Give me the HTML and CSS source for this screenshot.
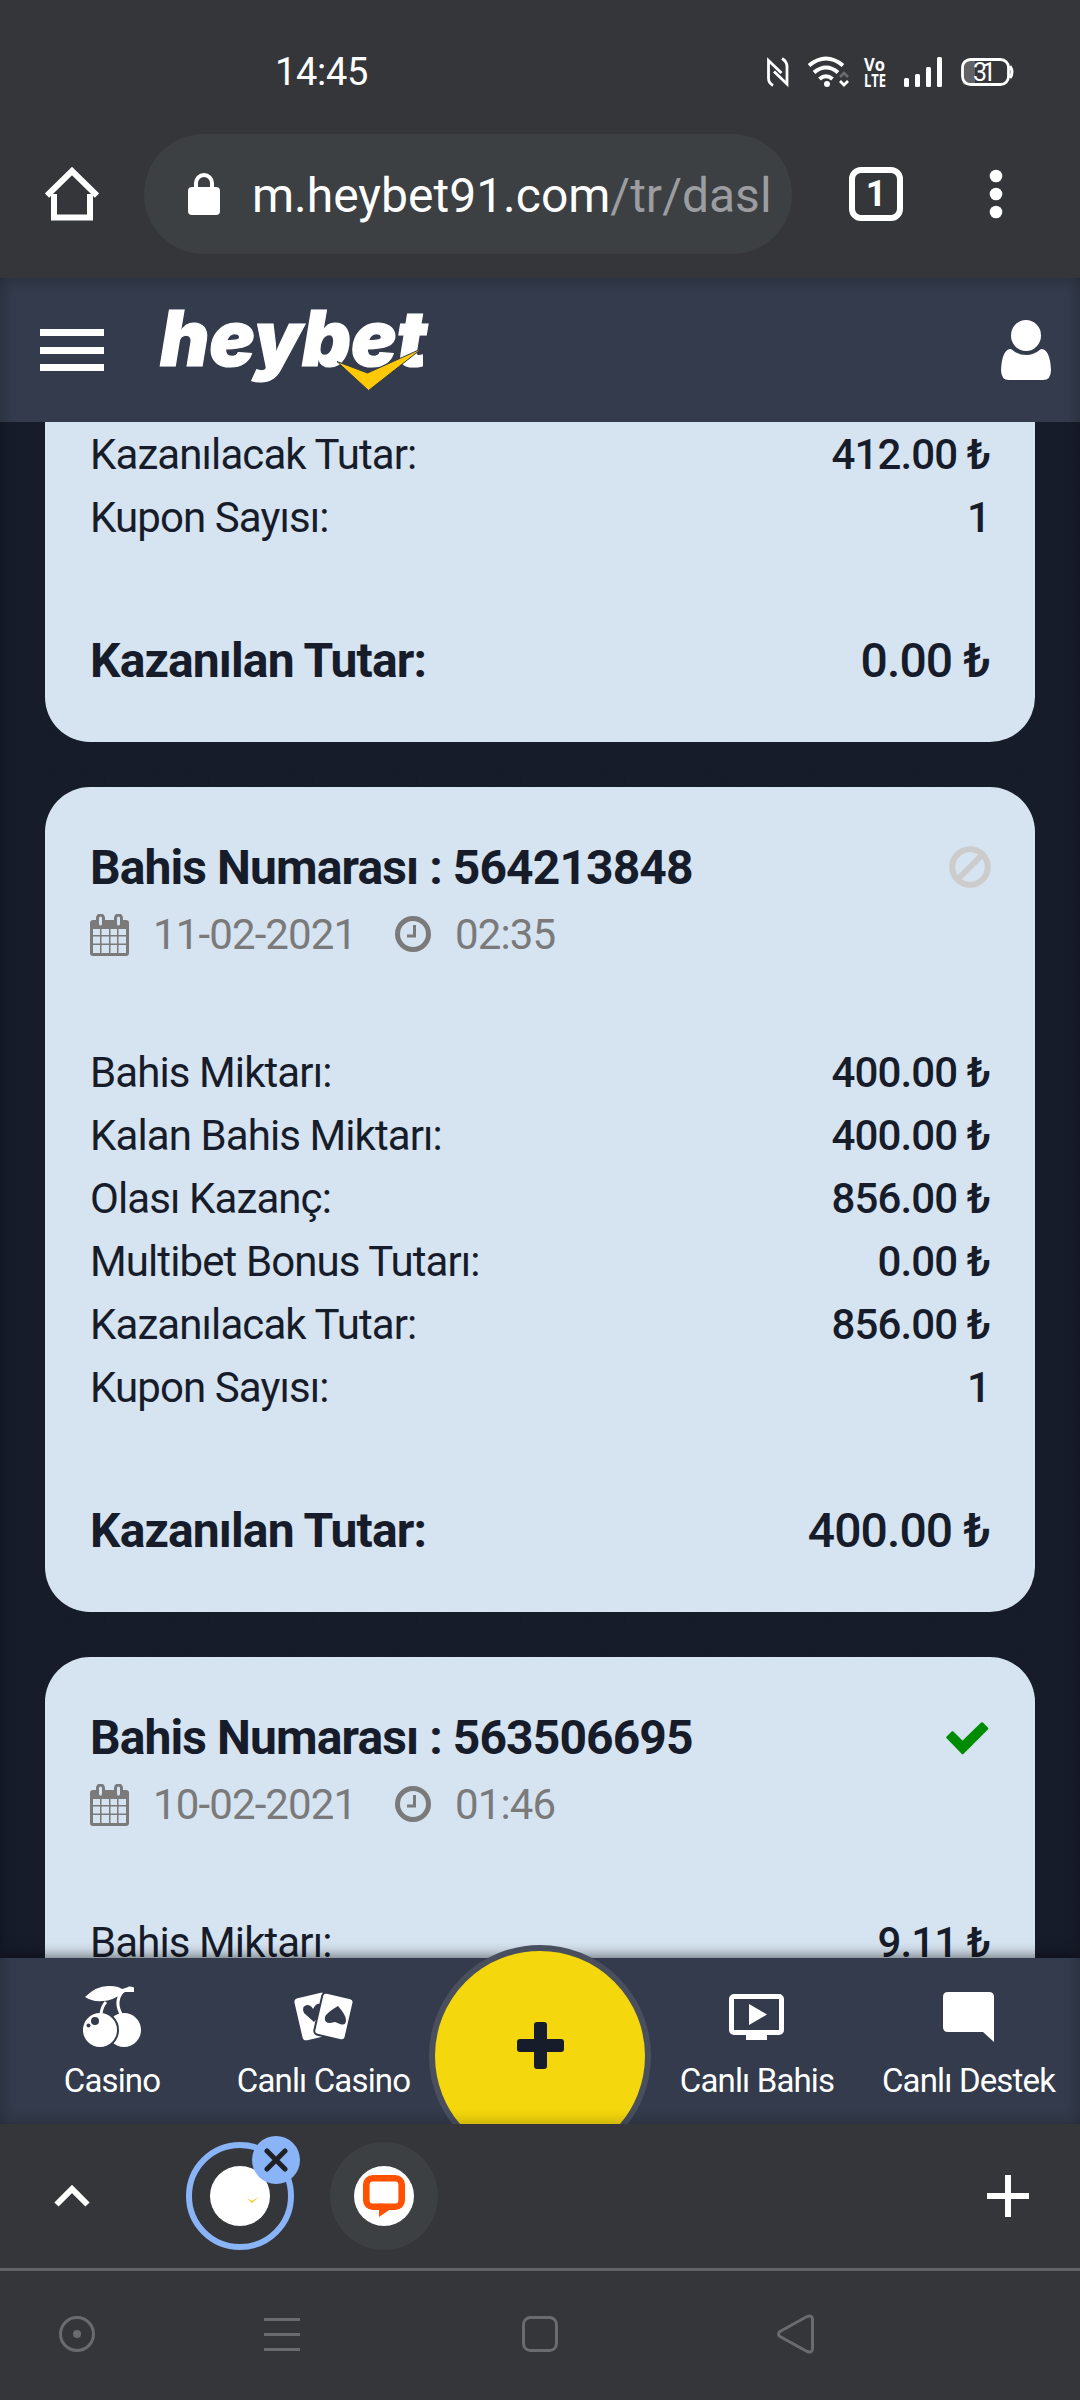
FILE: index.html
```html
<!DOCTYPE html>
<html lang="tr">
<head>
<meta charset="utf-8">
<title>heybet</title>
<link rel="stylesheet" href="styles.css">
</head>
<body>
<svg class="defs" width="0" height="0">
  <symbol id="cal" viewBox="0 0 39 42">
    <path fill="#7a7a7a" fill-rule="evenodd" d="M3 6h3V4a4 4 0 0 1 9 0v2h9V4a4 4 0 0 1 9 0v2h3a3 3 0 0 1 3 3v30a3 3 0 0 1-3 3H3a3 3 0 0 1-3-3V9a3 3 0 0 1 3-3zM9 4v6a1.500 1.500 0 0 0 3 0V4a1.500 1.500 0 0 0-3 0zm18 0v6a1.500 1.500 0 0 0 3 0V4a1.500 1.500 0 0 0-3 0zM3 15v6h7v-6zm8.500 0v6H19v-6zm9 0v6H27v-6zm8 0v6H36v-6zM3 22.500v7h7v-7zm8.500 0v7H19v-7zm9 0v7H27v-7zm8 0v7H36v-7zM3 31v8h7v-8zm8.500 0v8H19v-8zm9 0v8H27v-8zm8 0v8H36v-8z"/>
  </symbol>
  <symbol id="clk" viewBox="0 0 36 36">
    <circle cx="18" cy="18" r="15.500" fill="none" stroke="#7a7a7a" stroke-width="5"/>
    <path d="M19.500 9v11H12" fill="none" stroke="#7a7a7a" stroke-width="3"/>
  </symbol>
</svg>

<div class="status">
  <span class="time">14:45</span>
  <svg class="sysicons" width="260" height="40" viewBox="0 0 260 40">
    <path d="M9 33.500Q4.500 31 4.500 26V8.500L17.500 21M18 6.500Q23 9.500 23 14.500V32L10 19.500" fill="none" stroke="#fff" stroke-width="2.800"/>
    <g fill="none" stroke="#fff" stroke-width="4">
      <path d="M45 13.500q17-14 34 0M50 20.500q12-10 24 0M55.500 27q6.500-5.500 13 0"/>
    </g>
    <circle cx="63" cy="32" r="3" fill="#fff"/>
    <path d="M76 25l4-4 4 4" fill="none" stroke="#6b6c6e" stroke-width="2.500"/>
    <path d="M76 29l4 4 4-4" fill="none" stroke="#fff" stroke-width="2.800"/>
    <text class="volte" x="100" y="19" textLength="21" lengthAdjust="spacingAndGlyphs">Vo</text>
    <text class="volte" x="100" y="35" textLength="22" lengthAdjust="spacingAndGlyphs">LTE</text>
    <g fill="#fff"><rect x="140" y="26" width="5" height="9" rx="1.500"/><rect x="151" y="22" width="5" height="13" rx="1.500"/><rect x="162" y="15" width="5" height="20" rx="1.500"/><rect x="173" y="5" width="5" height="30" rx="1.500"/></g>
    <path d="M200 8h11v25h-11q-2-2-2-5V13q0-3 2-5z" fill="#616265"/>
    <rect x="198.500" y="7.500" width="46" height="25" rx="8" fill="none" stroke="#fff" stroke-width="2.800"/>
    <path d="M246 14q4 6 0 12" fill="none" stroke="#fff" stroke-width="3"/>
    <text class="batt" x="220.500" y="28.500" text-anchor="middle" textLength="23">31</text>
  </svg>
</div>

<div class="browser">
  <svg class="home" width="54" height="54" viewBox="0 0 54 54"><path d="M9 27v23.500h36V27M2 28.500L27 4l25 24.500" fill="none" stroke="#fff" stroke-width="6"/></svg>
  <div class="pill">
    <svg width="32" height="42" viewBox="0 0 32 42"><rect y="14" width="32" height="28" rx="4" fill="#fff"/><path d="M8 15v-5a8 8 0 0 1 16 0v5" fill="none" stroke="#fff" stroke-width="4"/></svg>
    <span class="url">m.heybet91.com<span class="path">/tr/dasl</span></span>
  </div>
  <span class="tabs">1</span>
  <svg class="dots" width="14" height="50" viewBox="0 0 14 50"><g fill="#fff"><circle cx="7" cy="7" r="6.300"/><circle cx="7" cy="25" r="6.300"/><circle cx="7" cy="43" r="6.300"/></g></svg>
</div>

<div class="page">
  <header class="top">
    <div class="burger"><i></i><i></i><i></i></div>
    <svg class="logo" width="280" height="90" viewBox="0 0 280 90">
      <text class="word" x="2" y="60.500" textLength="267" lengthAdjust="spacingAndGlyphs">heybet</text>
      <path d="M179 56.500l30.500 11.500L264 43.500 210.500 85.500z" fill="#ffca05" stroke="#333b4c" stroke-width="1"/>
    </svg>
    <svg class="user" width="50" height="60" viewBox="0 0 50 60"><path fill="#fff" d="M10 29Q1 29 0 50q0 10 8 10h34q8 0 8-10-1-21-10-21-7 6-15 6t-15-6z"/><ellipse cx="25" cy="15.500" rx="16" ry="16.500" fill="#fff" stroke="#333b4c" stroke-width="2"/></svg>
  </header>

  <main class="feed">
    <section class="card first">
      <div class="row"><span>Kazanılacak Tutar:</span><b>412.00 ₺</b></div>
      <div class="row"><span>Kupon Sayısı:</span><b>1</b></div>
      <div class="total"><span>Kazanılan Tutar:</span><b>0.00 ₺</b></div>
    </section>

    <section class="card full">
      <div class="title"><h2>Bahis Numarası : 564213848</h2>
        <svg class="ban" width="42" height="42" viewBox="0 0 42 42"><path d="M9.500 32.500L33 9" stroke="#ccc" stroke-width="6"/><circle cx="21" cy="21" r="17.800" fill="none" stroke="#ccc" stroke-width="6"/></svg></div>
      <div class="meta"><svg class="cal" width="39" height="42"><use href="#cal"/></svg><span class="date">11-02-2021</span><svg class="clk" width="36" height="36"><use href="#clk"/></svg><span>02:35</span></div>
      <div class="row"><span>Bahis Miktarı:</span><b>400.00 ₺</b></div>
      <div class="row"><span>Kalan Bahis Miktarı:</span><b>400.00 ₺</b></div>
      <div class="row"><span>Olası Kazanç:</span><b>856.00 ₺</b></div>
      <div class="row"><span>Multibet Bonus Tutarı:</span><b>0.00 ₺</b></div>
      <div class="row"><span>Kazanılacak Tutar:</span><b>856.00 ₺</b></div>
      <div class="row"><span>Kupon Sayısı:</span><b>1</b></div>
      <div class="total"><span>Kazanılan Tutar:</span><b>400.00 ₺</b></div>
    </section>

    <section class="card">
      <div class="title"><h2>Bahis Numarası : 563506695</h2>
        <svg class="ok" width="43" height="33" viewBox="0 0 43 33"><path d="M1.500 15.500L6.500 10.500 16.500 20.500 36 1.500 41 6.500 16.500 31z" fill="#008c00" stroke="#008c00" stroke-width="2.500" stroke-linejoin="round"/></svg></div>
      <div class="meta"><svg class="cal" width="39" height="42"><use href="#cal"/></svg><span class="date">10-02-2021</span><svg class="clk" width="36" height="36"><use href="#clk"/></svg><span>01:46</span></div>
      <div class="row"><span>Bahis Miktarı:</span><b>9.11 ₺</b></div>
    </section>
  </main>

  <nav class="dock">
    <a class="item casino">
      <svg width="60" height="64" viewBox="0 0 60 64"><g fill="#fff"><path d="M3 13Q15 1 28 2q8 0 12 3l5-1.500q2-2 7 0v4.500H43Q30 17 21 17 10 18 3 13z"/><circle cx="42" cy="46" r="17"/><circle cx="18" cy="46" r="18" stroke="#333b4c" stroke-width="2"/></g><path d="M41 7Q32 17 39 30M24 18q-4 4-5 12" fill="none" stroke="#fff" stroke-width="3"/><g fill="#333b4c"><circle cx="13" cy="37" r="4"/><circle cx="6.500" cy="41.500" r="2"/></g></svg>
      <span>Casino</span></a>
    <a class="item live">
      <svg width="64" height="64" viewBox="0 0 64 64"><rect x="6" y="11" width="32" height="43" rx="4" fill="#fff" transform="rotate(-13 22 32)"/><path d="M22 38L12 29q-3-7 3-8 4 0 6 4 3-6 7-5 4 1 2 9z" fill="#333b4c"/><rect x="26" y="11" width="32" height="43" rx="4" fill="#fff" stroke="#333b4c" stroke-width="2" transform="rotate(13 42 32)"/><path d="M46 22q8 9 8 14 0 6-6 4l-5-2-5 1q-6 0-5-6 1-4 13-11z" fill="#333b4c"/></svg>
      <span>Canlı Casino</span></a>
    <span></span>
    <a class="item bet">
      <svg width="64" height="64" viewBox="0 0 64 64"><rect x="6.500" y="12.500" width="50" height="36" rx="2.500" fill="none" stroke="#fff" stroke-width="5"/><path d="M24 20v21l18-10.500zM21 50h21v6H21z" fill="#fff"/></svg>
      <span>Canlı Bahis</span></a>
    <a class="item help">
      <svg width="64" height="64" viewBox="0 0 64 64"><path d="M11 8h41q5 0 5 5v45L46 48H11q-5 0-5-5V13q0-5 5-5z" fill="#fff"/></svg>
      <span>Canlı Destek</span></a>
    <div class="fab"><svg width="47" height="47" viewBox="0 0 47 47"><g fill="#171c2b"><rect y="17" width="47" height="13" rx="3"/><rect x="17" width="13" height="47" rx="3"/></g></svg></div>
  </nav>
</div>

<div class="strip">
  <svg class="up" width="36" height="24" viewBox="0 0 36 24"><path d="M2.500 20.500L18 5l15.500 15.500" fill="none" stroke="#fff" stroke-width="6"/></svg>
  <div class="tab active"><div class="disc"><svg width="14" height="8" viewBox="0 0 14 8"><path d="M1 2l5 3 7-4-7 6z" fill="#f5c518"/></svg></div>
    <div class="close"><svg width="24" height="24" viewBox="0 0 24 24"><path d="M3 3l18 18M21 3L3 21" stroke="#202124" stroke-width="5" stroke-linecap="round"/></svg></div></div>
  <div class="tab"><div class="disc"><svg width="60" height="60" viewBox="0 0 60 60"><rect x="12.300" y="12.300" width="35.400" height="28.400" rx="6.500" fill="none" stroke="#ff5100" stroke-width="6.600"/><path d="M25 37.500V51l11-7.500 4-5z" fill="#ff5100"/></svg></div></div>
  <svg class="add" width="42" height="42" viewBox="0 0 42 42"><path d="M0 21h42M21 0v42" stroke="#fff" stroke-width="6"/></svg>
</div>
<div class="sysnav">
  <svg width="1080" height="60" viewBox="0 0 1080 60"><g fill="none" stroke="#6a6b6f" stroke-width="3"><circle cx="77" cy="30" r="16.500"/><path d="M264 15.500h36M264 30.500h36M264 45.500h36M780 27.500l27-15q5.500-2 5.500 3v29q0 5-5.500 3l-27-15q-3-2.500 0-5z"/><rect x="523.500" y="13.500" width="33" height="33" rx="7"/></g><circle cx="77" cy="30" r="4" fill="#6a6b6f"/></svg>
</div>
</body>
</html>
```
FILE: styles.css
```css
* { box-sizing: border-box; }
body { margin: 0; width: 1080px; height: 2400px; overflow: hidden; background: #35363a; color: #171c2b; font-family: Roboto, "Noto Sans", sans-serif; }
svg { display: block; flex: none; }
.defs { position: absolute; }

.status { height: 110px; padding: 45px 56px 0 275px; display: flex; justify-content: space-between; align-items: flex-start; }
.time { color: #fff; font-size: 38px; line-height: 54px; font-weight: 400; letter-spacing: -0.3px; }
.sysicons { margin: 7px 0 0; }
.volte { font: 700 18px "Open Sans", sans-serif; fill: #fff; }
.batt { font: 400 25px Roboto, sans-serif; fill: #fff; }

.browser { height: 168px; padding: 24px 0 24px 45px; display: flex; align-items: center; }
.pill { width: 648px; height: 120px; margin-left: 45px; padding-left: 44px; border-radius: 60px; background: #3c4043; display: flex; align-items: center; gap: 32px; overflow: hidden; }
.url { font-size: 48px; color: #fff; white-space: nowrap; padding-top: 3px; }
.path { color: #9b9da0; }
.tabs { width: 54px; height: 54px; margin-left: 57px; border: 6px solid #fff; border-radius: 12px; color: #fff; font-size: 36px; font-weight: 700; line-height: 43px; text-align: center; }
.dots { margin-left: 86px; }

.page { position: relative; height: 1846px; overflow: hidden; background-color: #171c2b;
  background-image: repeating-linear-gradient(30deg, #00000009 0 1px, transparent 1px 17.320px), repeating-linear-gradient(150deg, #00000009 0 1px, transparent 1px 17.320px), repeating-linear-gradient(90deg, #00000009 0 1px, transparent 1px 17.320px); }
.page::after { content: ""; position: absolute; inset: 0; box-shadow: inset 0 0 15px #0000004d; }
.top { height: 144px; padding: 0 29px 0 40px; display: flex; align-items: center; background: #333b4c; }
.burger { width: 64px; display: grid; gap: 10.500px; }
.burger i { height: 7px; background: #fff; }
.logo { margin: 0 auto 0 54px; overflow: visible; }
.word { font: italic 900 77px Inter, sans-serif; fill: #fff; stroke: #fff; stroke-width: 1.200px; }

.feed { display: grid; gap: 45px; padding: 0 45px; }
.card { padding: 46px 45px 45px; border-radius: 45px; background: #d6e3f0; }
.first { padding-top: 1px; border-radius: 0 0 45px 45px; height: 320px; }
.full { height: 825px; }
.row { height: 63px; display: flex; justify-content: space-between; font-size: 42px; line-height: 63px; letter-spacing: -0.9px; }
.row b { font-weight: 500; }
.total { margin-top: 76px; display: flex; justify-content: space-between; font-size: 48px; font-weight: 700; line-height: 72px; letter-spacing: -0.88px; }
.total b { font-weight: 500; }
.title { display: flex; justify-content: space-between; align-items: center; height: 70px; }
.title h2 { margin: 0; font-size: 48px; line-height: 70px; font-weight: 700; letter-spacing: -0.9px; }
.ban { margin: -2px -1px 0 0; }
.ok { margin-right: 1px; }
.meta { height: 138px; display: flex; align-items: flex-start; font-size: 42px; line-height: 63px; letter-spacing: -0.88px; color: #7a7a7a; }
.meta .cal { margin: 11px 24px 0 0; }
.meta .date { width: 242px; }
.meta .clk { margin: 13px 24px 0 0; }

.dock { position: absolute; left: 0; right: 0; bottom: 0; height: 166px; display: grid; grid-template-columns: 224px 199px 234px 200px 1fr; background: #333b4c; box-shadow: 0 0 14px #000a; }
.item { display: flex; flex-direction: column; align-items: center; padding-top: 26px; color: #fff; font-size: 33px; line-height: 44px; letter-spacing: -0.85px; white-space: nowrap; }
.item svg { height: 64px; margin-bottom: 11px; }
.fab { position: absolute; left: 429px; top: -13px; width: 222px; height: 222px; border: 6px solid #4a4f5e; border-radius: 50%; background: #f4d70c; display: flex; justify-content: center; padding-top: 71px; }

.strip { height: 147px; border-bottom: 3px solid #626366; padding: 0 51px 0 54px; display: flex; align-items: center; }
.tab { position: relative; width: 108px; height: 108px; margin-left: 36px; border-radius: 50%; background: #3c4043; display: flex; align-items: center; justify-content: center; }
.tab.active { margin-left: 96px; border: 6px solid #8ab4f8; background: none; }
.disc { width: 60px; height: 60px; border-radius: 50%; background: #fff; display: flex; align-items: center; justify-content: center; }
.active .disc { padding: 7px 0 0 26px; }
.close { position: absolute; left: 60px; top: -12px; width: 48px; height: 48px; border-radius: 50%; background: #8ab4f8; display: flex; align-items: center; justify-content: center; }
.add { margin-left: auto; }
.sysnav { padding-top: 33px; }
```
